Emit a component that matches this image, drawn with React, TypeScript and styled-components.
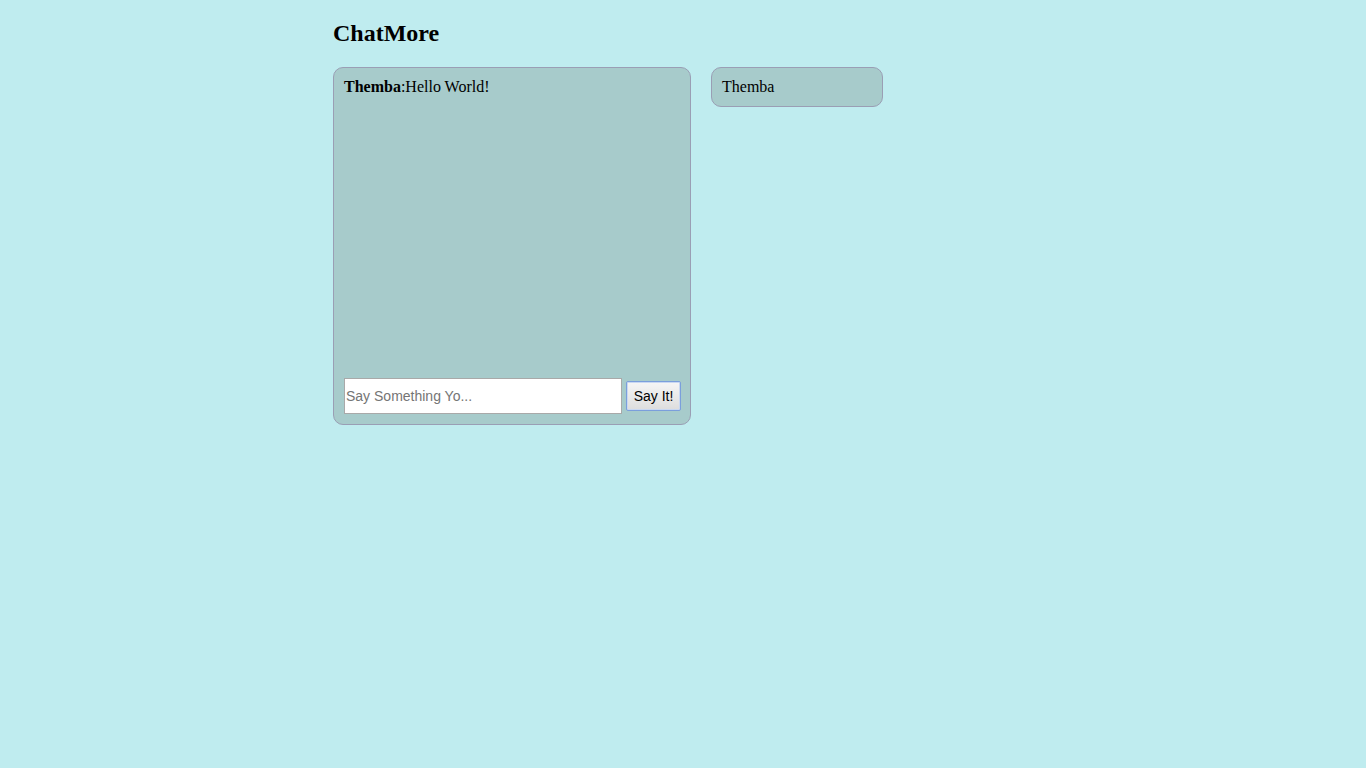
import React from "react";
import styled, { createGlobalStyle } from "styled-components";

const Global = createGlobalStyle`
  html, body { margin: 0; padding: 0; }
  body {
    background: #bfecef;
    font-family: "Liberation Serif", "Times New Roman", serif;
    font-size: 16px;
    color: #000;
    min-height: 768px;
  }
`;

const Page = styled.div`
  width: 700px;
  margin: 0 auto;
  padding-top: 20px;
`;

const Title = styled.h1`
  margin: 0 0 20px;
  font-size: 24px;
  font-weight: bold;
  line-height: 27px;
`;

const Row = styled.div`
  display: flex;
  align-items: flex-start;
  gap: 20px;
`;

const Panel = styled.div<{ $w: number; $h?: number }>`
  box-sizing: border-box;
  width: ${(p) => p.$w}px;
  ${(p) => (p.$h ? `height: ${p.$h}px;` : "")}
  background: #a7cbcb;
  border: 1px solid #9a9eb4;
  border-radius: 10px;
  padding: 10px;
  line-height: 18px;
`;

const ChatPanel = styled(Panel)`
  display: flex;
  flex-direction: column;
`;

const Messages = styled.div`
  flex: 1;
`;

const Form = styled.form`
  display: flex;
  align-items: center;
  gap: 4px;
  margin: 0;
`;

const Input = styled.input`
  box-sizing: border-box;
  flex-shrink: 0;
  width: 278px;
  height: 36px;
  border: 1px solid #a9a9a9;
  background: #fff;
  padding: 0 1px;
  font-family: "Liberation Sans", Arial, sans-serif;
  font-size: 14px;
  color: #000;
  outline: none;
  &::placeholder { color: #757575; }
`;

const Button = styled.button`
  box-sizing: border-box;
  flex-shrink: 0;
  width: 55px;
  height: 30px;
  border: 1px solid #7b9fdc;
  border-radius: 2px;
  box-shadow: inset 0 0 0 1px #c9d8f2;
  background: linear-gradient(#f6f6f6, #dddddd);
  font-family: "Liberation Sans", Arial, sans-serif;
  font-size: 14px;
  color: #000;
  padding: 0;
`;

export default function App() {
  return (
    <>
      <Global />
      <Page>
        <Title>ChatMore</Title>
        <Row>
          <ChatPanel $w={358} $h={358}>
            <Messages>
              <div>
                <b>Themba</b>:Hello World!
              </div>
            </Messages>
            <Form onSubmit={(e) => e.preventDefault()}>
              <Input placeholder="Say Something Yo..." />
              <Button type="submit">Say It!</Button>
            </Form>
          </ChatPanel>
          <Panel $w={172}>Themba</Panel>
        </Row>
      </Page>
    </>
  );
}
